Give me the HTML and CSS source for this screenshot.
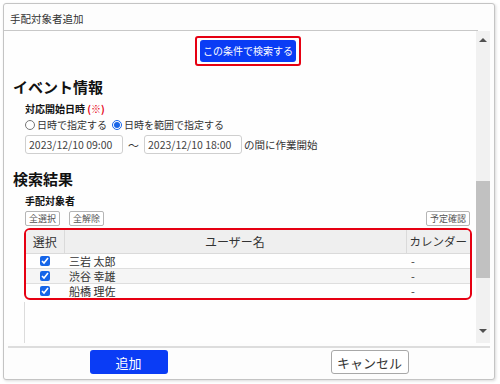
FILE: index.html
```html
<!DOCTYPE html>
<html lang="ja">
<head>
    <meta charset="UTF-8">
    <title>手配対象者追加</title>
    <link rel="stylesheet" href="styles.css">
</head>
<body>
    <div class="dialog">
        <div class="dialog-title">手配対象者追加</div>

        <div class="dialog-body">
            <div class="scroll-content">
                <div class="search-row">
                    <span class="search-frame">
                        <button class="btn-search">この条件で検索する</button>
                    </span>
                </div>

                <h2 class="section-title">イベント情報</h2>
                <div class="field">
                    <div class="field-label">対応開始日時 <span class="required">(※)</span></div>
                    <div class="radio-row">
                        <label><input type="radio" name="mode">日時で指定する</label>
                        <label><input type="radio" name="mode" checked>日時を範囲で指定する</label>
                    </div>
                    <div class="range-row">
                        <input class="date-input" type="text" value="2023/12/10 09:00">
                        <span class="tilde">〜</span>
                        <input class="date-input" type="text" value="2023/12/10 18:00">
                        <span class="range-note">の間に作業開始</span>
                    </div>
                </div>

                <h2 class="section-title results">検索結果</h2>
                <div class="field">
                    <div class="field-label">手配対象者</div>
                    <div class="tool-row">
                        <div class="tool-left">
                            <button class="btn-small">全選択</button>
                            <button class="btn-small">全解除</button>
                        </div>
                        <button class="btn-small">予定確認</button>
                    </div>
                </div>

                <div class="table-frame">
                    <table class="user-table">
                        <thead>
                            <tr>
                                <th class="col-check">選択</th>
                                <th class="col-name">ユーザー名</th>
                                <th class="col-cal">カレンダー</th>
                            </tr>
                        </thead>
                        <tbody>
                            <tr>
                                <td class="col-check"><input type="checkbox" checked></td>
                                <td>三岩 太郎</td>
                                <td>-</td>
                            </tr>
                            <tr class="alt">
                                <td class="col-check"><input type="checkbox" checked></td>
                                <td>渋谷 幸雄</td>
                                <td>-</td>
                            </tr>
                            <tr>
                                <td class="col-check"><input type="checkbox" checked></td>
                                <td>船橋 理佐</td>
                                <td>-</td>
                            </tr>
                        </tbody>
                    </table>
                </div>
                <div class="table-tail"></div>
            </div>

            <!-- fake scrollbar -->
            <div class="scrollbar">
                <span class="arrow-up"></span>
                <span class="thumb"></span>
                <span class="arrow-down"></span>
            </div>
        </div>

        <div class="dialog-footer">
            <button class="btn-primary">追加</button>
            <button class="btn-cancel">キャンセル</button>
        </div>
    </div>
</body>
</html>
```

FILE: styles.css
```css
* {
    margin: 0;
    padding: 0;
    box-sizing: border-box;
}

body {
    font-family: "Noto Sans CJK JP", "Noto Sans", sans-serif;
    background: #ffffff;
    color: #222;
    width: 500px;
    height: 384px;
    overflow: hidden;
}

.dialog {
    margin: 3px 5px 0 3px;
    height: 377px;
    border: 1px solid #c4c4c4;
    border-radius: 3px;
    background: #fdfdfd;
    box-shadow: 1px 1px 3px rgba(0, 0, 0, 0.15);
    display: flex;
    flex-direction: column;
}

.dialog-title {
    height: 27px;
    padding: 8px 0 0 6px;
    font-size: 10.5px;
    line-height: 14px;
    color: #333;
    border-bottom: 1px solid #c8c8c8;
    margin-right: 16px;
}

.dialog-body {
    display: flex;
    height: 312px;
    padding-right: 4px;
}

.scroll-content {
    flex: 1;
    background: #fefefe;
    display: flex;
    flex-direction: column;
}

.search-row {
    text-align: center;
    padding-left: 16px;
    margin-top: 5px;
    line-height: 0;
}

.search-frame {
    display: inline-block;
    border: 2px solid #e60012;
    border-radius: 3px;
    padding: 2px 3px;
}

.btn-search {
    font-family: inherit;
    font-size: 10px;
    line-height: 14px;
    color: #fff;
    background: #0a3cf5;
    border: none;
    border-radius: 3px;
    padding: 0;
    white-space: nowrap;
    width: 96px;
    height: 22px;
}

.section-title {
    font-size: 15px;
    line-height: 20px;
    font-weight: bold;
    color: #111;
    margin: 11px 0 0 9px;
}

.section-title.results {
    margin-top: 15px;
}

.field {
    margin-left: 21px;
}

.field-label {
    font-size: 10px;
    line-height: 14px;
    font-weight: bold;
    margin-top: 5px;
    color: #111;
}

.required {
    color: #e60012;
}

.radio-row {
    display: flex;
    gap: 5px;
    font-size: 10px;
    line-height: 16px;
    color: #333;
    margin-top: 1px;
}

.radio-row label {
    display: flex;
    align-items: center;
}

.radio-row input {
    width: 10px;
    height: 10px;
    margin: 0 2px 0 0;
    accent-color: #1a66e8;
}

.range-row {
    display: flex;
    align-items: center;
    margin-top: 2px;
    font-size: 10.5px;
    color: #333;
}

.date-input {
    width: 98px;
    height: 19px;
    font-family: inherit;
    font-size: 10.5px;
    color: #444;
    border: 1px solid #cfcfcf;
    border-radius: 3px;
    padding: 0 3px;
    background: #fff;
}

.tilde {
    margin: 0 5px;
    font-size: 11px;
}

.range-note {
    margin-left: 2px;
}

.tool-row {
    display: flex;
    justify-content: space-between;
    align-items: flex-end;
    margin-top: 3px;
    padding-right: 6px;
}

.tool-left {
    display: flex;
    gap: 9px;
}

.btn-small {
    font-family: inherit;
    font-size: 9px;
    line-height: 11px;
    color: #555;
    background: #fff;
    border: 1px solid #b5b5b5;
    border-radius: 2px;
    padding: 1px 3px;
    height: 15px;
}

.table-frame {
    margin: 2px 0 0 20px;
    width: 448px;
    border: 2px solid #e60012;
    border-radius: 6px;
    overflow: hidden;
}

.user-table {
    width: 100%;
    border-collapse: collapse;
    font-size: 11px;
    color: #333;
}

.user-table th {
    background: #efefef;
    font-weight: normal;
    font-size: 12px;
    height: 23px;
    border-bottom: 1px solid #dadada;
    border-left: 1px solid #dadada;
}

.user-table th:first-child {
    border-left: none;
}

.user-table th.col-cal {
    font-size: 11.5px;
}

.col-check {
    width: 38px;
    text-align: center;
}

.col-cal {
    width: 64px;
}

.user-table td {
    height: 15px;
    line-height: 14px;
    padding: 0 5px;
    border-bottom: 1px solid #dedede;
}

.user-table td.col-check {
    padding: 0;
}

.user-table tbody tr:last-child td {
    border-bottom: none;
}

.user-table tr.alt td {
    background: #f5f5f5;
}

.user-table input[type="checkbox"] {
    width: 10px;
    height: 10px;
    margin: 2px 0 0 0;
    accent-color: #1565e8;
    vertical-align: top;
}

.table-tail {
    flex: 1;
    margin-left: 20px;
    border-left: 1px solid #dcdcdc;
    margin-top: 2px;
}

/* scrollbar */
.scrollbar {
    width: 14px;
    background: #f1f1f1;
    position: relative;
}

.arrow-up,
.arrow-down {
    position: absolute;
    left: 3px;
    width: 0;
    height: 0;
    border-left: 4px solid transparent;
    border-right: 4px solid transparent;
}

.arrow-up {
    top: 7px;
    border-bottom: 4px solid #505050;
}

.arrow-down {
    bottom: 10px;
    border-top: 4px solid #505050;
}

.thumb {
    position: absolute;
    left: 0;
    top: 150px;
    width: 14px;
    height: 97px;
    background: #c1c1c1;
}

.dialog-footer {
    margin: 3px 4px 0 4px;
    border-top: 2px solid #dddddd;
    padding-top: 2px;
    display: flex;
    justify-content: space-around;
}

.btn-primary,
.btn-cancel {
    font-family: inherit;
    font-size: 13px;
    width: 78px;
    height: 24px;
    border-radius: 3px;
}

.btn-primary {
    color: #fff;
    background: #0a3cf5;
    border: none;
}

.btn-cancel {
    color: #333;
    background: #fff;
    border: 1px solid #a8a8a8;
}
```
